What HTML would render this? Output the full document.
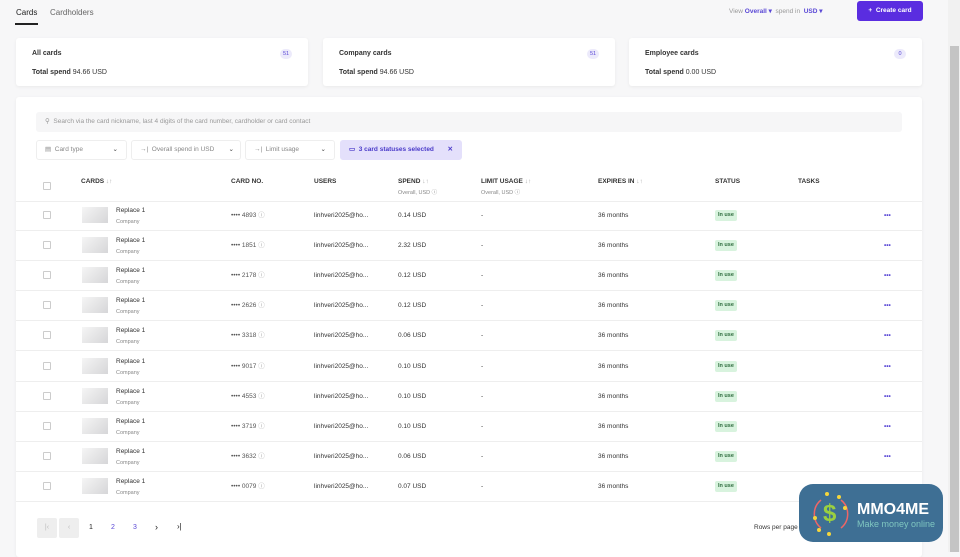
<!DOCTYPE html>
<html><head><meta charset="utf-8"><style>
*{box-sizing:border-box;margin:0;padding:0}
body{width:960px;height:552px;overflow:hidden;background:#f7f7f8;font-family:"Liberation Sans",sans-serif;color:#222;position:relative;font-size:7px}
.abs{position:absolute}
.card{position:absolute;top:38px;height:48px;background:#fff;border-radius:3px;box-shadow:0 1px 3px rgba(0,0,0,.06)}
.card .t{position:absolute;left:16px;top:12px;font-size:7px;font-weight:bold;color:#333}
.card .s{position:absolute;left:16px;top:31px;font-size:7px;color:#333}
.card .b{position:absolute;right:16px;top:11px;width:12px;height:10px;border-radius:5px;background:#eceafb;color:#5a48d6;font-size:5.5px;text-align:center;line-height:10px}
.panel{position:absolute;left:16px;top:97px;width:906px;height:460px;background:#fff;border-radius:3px;box-shadow:0 1px 3px rgba(0,0,0,.06)}
.row{position:absolute;left:0;width:906px;height:30px;border-bottom:1px solid #eee}
.row div{position:absolute;font-size:6.5px;color:#333;line-height:8px}
.cb{width:8px;height:8px;border:1px solid #ccc;border-radius:1px;background:#fff}
.th{position:absolute;font-size:6.5px;font-weight:bold;color:#333}
.sub{position:absolute;font-size:5.5px;color:#888}
.row div.pill{background:#d8f3de;color:#2c6a3c;border-radius:2px;padding:2px 3px;font-size:5.5px;font-weight:bold;line-height:7px}
.thumb{width:26px;height:16px;background:linear-gradient(135deg,#f5f5f5,#d6d6d8)}
.flt{position:absolute;top:43px;height:20px;border:1px solid #eee;border-radius:3px;font-size:6.5px;color:#888;line-height:18px;padding-left:8px}
</style></head><body>
<div class="abs" style="left:16px;top:8px;font-size:8px;color:#222">Cards</div>
<div class="abs" style="left:15px;top:23px;width:23px;height:1.5px;background:#222"></div>
<div class="abs" style="left:50px;top:8px;font-size:8px;color:#666">Cardholders</div>
<div class="abs" style="left:729px;top:7px;font-size:6.5px;color:#999">View <b style="color:#5a48d6">Overall ▾</b>&nbsp; spend in &nbsp;<b style="color:#5a48d6">USD ▾</b></div>
<div class="abs" style="left:857px;top:1px;width:66px;height:20px;background:#5a2de0;border-radius:3px;color:#fff;font-size:6.5px;font-weight:bold;line-height:20px;text-align:center">+&nbsp;&nbsp;Create card</div>
<div class="abs" style="left:948px;top:0;width:12px;height:552px;background:#f1f1f1"></div>
<div class="abs" style="left:950px;top:46px;width:9px;height:506px;background:#c4c4c4"></div>

<div class="card" style="left:16px;width:292px"><div class="t">All cards</div><div class="s"><b>Total spend</b> 94.66 USD</div><div class="b">51</div></div>
<div class="card" style="left:323px;width:292px"><div class="t">Company cards</div><div class="s"><b>Total spend</b> 94.66 USD</div><div class="b">51</div></div>
<div class="card" style="left:629px;width:293px"><div class="t">Employee cards</div><div class="s"><b>Total spend</b> 0.00 USD</div><div class="b">0</div></div>

<div class="panel">
<div class="abs" style="left:20px;top:15px;width:866px;height:20px;background:#f6f6f7;border-radius:3px;font-size:6.5px;color:#999;line-height:20px;padding-left:9px">⚲&nbsp; Search via the card nickname, last 4 digits of the card number, cardholder or card contact</div>
<div class="flt" style="left:20px;width:91px">▤ &nbsp;Card type<span style="position:absolute;right:8px;color:#444">⌄</span></div>
<div class="flt" style="left:115px;width:110px">→| &nbsp;Overall spend in USD<span style="position:absolute;right:6px;color:#444">⌄</span></div>
<div class="flt" style="left:229px;width:90px">→| &nbsp;Limit usage<span style="position:absolute;right:8px;color:#444">⌄</span></div>
<div class="flt" style="left:324px;width:122px;background:#e4e0fb;border-color:#e4e0fb;color:#4a3ac9;font-weight:bold">▭ &nbsp;3 card statuses selected<span style="position:absolute;right:8px">✕</span></div>
<div class="cb abs" style="left:27px;top:85px"></div>
<div class="th" style="left:65px;top:81px">CARDS <span style="color:#aaa;font-weight:normal">↓↑</span></div>
<div class="th" style="left:215px;top:81px">CARD NO.</div>
<div class="th" style="left:298px;top:81px">USERS</div>
<div class="th" style="left:382px;top:81px">SPEND <span style="color:#aaa;font-weight:normal">↓↑</span></div><div class="sub" style="left:382px;top:91px">Overall, USD ⓘ</div>
<div class="th" style="left:465px;top:81px">LIMIT USAGE <span style="color:#aaa;font-weight:normal">↓↑</span></div><div class="sub" style="left:465px;top:91px">Overall, USD ⓘ</div>
<div class="th" style="left:582px;top:81px">EXPIRES IN <span style="color:#aaa;font-weight:normal">↓↑</span></div>
<div class="th" style="left:699px;top:81px">STATUS</div>
<div class="th" style="left:782px;top:81px">TASKS</div>
<div class="abs" style="left:0;top:104px;width:906px;height:1px;background:#eee"></div>
</div>

<div id="rows"></div>
<script>
var d=[["4893","0.14"],["1851","2.32"],["2178","0.12"],["2626","0.12"],["3318","0.06"],["9017","0.10"],["4553","0.10"],["3719","0.10"],["3632","0.06"],["0079","0.07"]];
var h='';
d.forEach(function(r,i){var y=201+i*30.1;
h+='<div class="row" style="left:16px;top:'+y+'px;position:absolute">'+
'<div class="cb" style="left:27px;top:10px"></div>'+
'<div class="thumb" style="left:66px;top:6px"></div>'+
'<div style="left:100px;top:6px">Replace 1</div><div style="left:100px;top:17px;font-size:5.5px;color:#888">Company</div>'+
'<div style="left:215px;top:11px;color:#555">•••• '+r[0]+' <span style="color:#aaa">ⓘ</span></div>'+
'<div style="left:298px;top:11px">linhveri2025@ho...</div>'+
'<div style="left:382px;top:11px">'+r[1]+' USD</div>'+
'<div style="left:465px;top:11px">-</div>'+
'<div style="left:582px;top:11px">36 months</div>'+
'<div class="pill" style="left:699px;top:9px">In use</div>'+
'<div style="left:868px;top:11px;color:#5a48d6;font-weight:bold">•••</div></div>';});
document.getElementById('rows').innerHTML=h;
</script>
<div class="abs" style="left:37px;top:518px;width:20px;height:20px;background:#eee;border-radius:2px;color:#bbb;text-align:center;line-height:20px">|‹</div>
<div class="abs" style="left:59px;top:518px;width:20px;height:20px;background:#eee;border-radius:2px;color:#bbb;text-align:center;line-height:20px">‹</div>
<div class="abs" style="left:89px;top:524px;font-size:7px">1</div>
<div class="abs" style="left:111px;top:524px;font-size:7px;color:#5a48d6">2</div>
<div class="abs" style="left:133px;top:524px;font-size:7px;color:#5a48d6">3</div>
<div class="abs" style="left:155px;top:522px;font-size:9px">›</div>
<div class="abs" style="left:177px;top:522px;font-size:8px">›|</div>
<div class="abs" style="left:754px;top:524px;font-size:6.5px;color:#333">Rows per page</div>
<div class="abs" style="left:799px;top:484px;width:144px;height:58px;background:#3e6f94;border-radius:14px">
<svg class="abs" style="left:8px;top:4px" width="48" height="50"><path d="M14 12 A18 18 0 0 0 14 40" stroke="#e66" stroke-width="1.5" fill="none"/><path d="M34 40 A18 18 0 0 0 34 12" stroke="#e66" stroke-width="1.5" fill="none"/><text x="16" y="33" font-size="24" font-weight="bold" fill="#9ad040" font-family="Liberation Sans">$</text><circle cx="20" cy="6" r="2" fill="#f5d63c"/><circle cx="32" cy="9" r="2" fill="#f5d63c"/><circle cx="38" cy="20" r="2" fill="#f5d63c"/><circle cx="8" cy="30" r="2" fill="#f5d63c"/><circle cx="12" cy="42" r="2" fill="#f5d63c"/><circle cx="22" cy="46" r="2" fill="#f5d63c"/></svg>
<div class="abs" style="left:58px;top:17px;color:#fff;font-size:16px;font-weight:bold">MMO4ME</div>
<div class="abs" style="left:58px;top:35px;color:#7fc6c0;font-size:9px">Make money online</div>
</div>
</body></html>
